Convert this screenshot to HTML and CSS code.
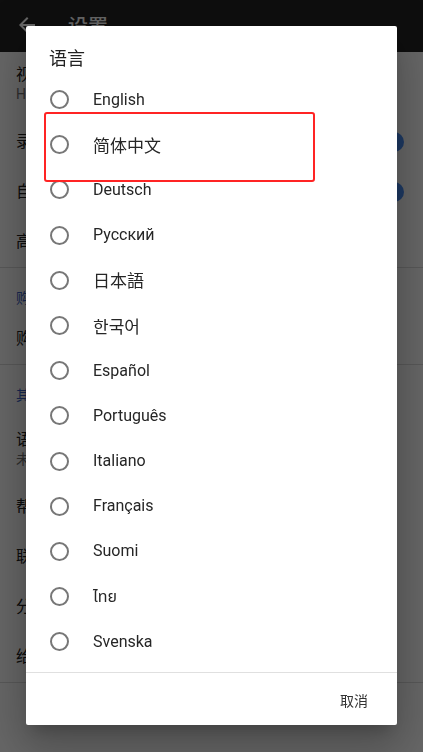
FILE: index.html
```html
<!DOCTYPE html>
<html lang="zh-CN">
<head>
<meta charset="utf-8">
<title>设置</title>
<link rel="stylesheet" href="styles.css">
</head>
<body>
<div class="screen">
  <header class="appbar">
    <svg class="back" viewBox="0 0 24 24" width="24" height="24"><path d="M20 11H7.83l5.59-5.59L12 4l-8 8 8 8 1.41-1.41L7.83 13H20v-2z" fill="#fff"/></svg>
    <span class="appbar-title">设置</span>
  </header>
  <div class="item two">
    <div class="item-title">视频质量</div>
    <div class="item-sub">HD 720p</div>
  </div>
  <div class="item"><span class="item-title">录制音频</span><span class="switch"><span class="knob"></span></span></div>
  <div class="item"><span class="item-title">自动保存</span><span class="switch"><span class="knob"></span></span></div>
  <div class="item"><span class="item-title">高级设置</span></div>
  <div class="divider"></div>
  <div class="cat">购买</div>
  <div class="item"><span class="item-title">购买专业版</span></div>
  <div class="divider"></div>
  <div class="cat">其他</div>
  <div class="item two two-b">
    <div class="item-title">语言</div>
    <div class="item-sub">未设置</div>
  </div>
  <div class="item"><span class="item-title">帮助</span></div>
  <div class="item"><span class="item-title">联系我们</span></div>
  <div class="item"><span class="item-title">分享应用</span></div>
  <div class="item"><span class="item-title">给我们评分</span></div>
  <div class="divider"></div>
</div>
<div class="scrim"></div>
<div class="dialog">
  <div class="dialog-title">语言</div>
  <ul class="options">
    <li class="option"><span class="radio"></span><span class="label">English</span></li>
    <li class="option"><span class="radio"></span><span class="label cjk">简体中文</span></li>
    <li class="option"><span class="radio"></span><span class="label">Deutsch</span></li>
    <li class="option"><span class="radio"></span><span class="label">Русский</span></li>
    <li class="option"><span class="radio"></span><span class="label cjk ja">日本語</span></li>
    <li class="option"><span class="radio"></span><span class="label cjk ko">한국어</span></li>
    <li class="option"><span class="radio"></span><span class="label">Español</span></li>
    <li class="option"><span class="radio"></span><span class="label">Português</span></li>
    <li class="option"><span class="radio"></span><span class="label">Italiano</span></li>
    <li class="option"><span class="radio"></span><span class="label">Français</span></li>
    <li class="option"><span class="radio"></span><span class="label">Suomi</span></li>
    <li class="option"><span class="radio"></span><span class="label th">ไทย</span></li>
    <li class="option"><span class="radio"></span><span class="label">Svenska</span></li>
  </ul>
  <div class="dialog-actions"><span class="btn">取消</span></div>
</div>
<div class="highlight"></div>
</body>
</html>
```

FILE: styles.css
```css
* { box-sizing: border-box; }
html, body { margin: 0; padding: 0; }
body {
  width: 423px;
  height: 752px;
  overflow: hidden;
  background: #fff;
  font-family: Roboto, "Noto Sans CJK SC", "Noto Sans", sans-serif;
  color: #212121;
}
.screen { display: flex; flex-direction: column; }
.appbar {
  height: 52px;
  background: #252525;
  display: flex;
  align-items: center;
  padding-left: 15px;
  gap: 29px;
}
.back { display: block; margin-top: -2px; }
.appbar-title { color: #fff; font-size: 20px; font-weight: 500; line-height: 24px; margin-top: 2px; }
.item {
  height: 50px;
  padding: 0 16px;
  display: flex;
  align-items: center;
  justify-content: space-between;
  font-size: 16px;
}
.item.two {
  height: 65px;
  flex-direction: column;
  align-items: flex-start;
  justify-content: flex-start;
  padding-top: 13px;
}
.item.two-b { height: 71px; padding-top: 19px; }
.item-title { line-height: 20px; }
.item-sub { line-height: 18px; font-size: 14px; color: #757575; }
.divider { height: 1px; background: #dcdcdc; }
.cat {
  height: 46px;
  padding: 21px 16px 7px;
  font-size: 14px;
  line-height: 18px;
  color: #3a62c8;
}
.switch { position: relative; width: 36px; height: 14px; border-radius: 7px; background: #a9c3ee; margin-right: 5px; }
.knob {
  position: absolute;
  right: -2px;
  top: -3px;
  width: 20px;
  height: 20px;
  border-radius: 50%;
  background: #4a8ff7;
}
.scrim { position: fixed; inset: 0; background: rgba(0, 0, 0, 0.6); }
.dialog {
  position: absolute;
  left: 26px;
  top: 26px;
  width: 371px;
  height: 699px;
  background: #fff;
  border-radius: 2px;
  box-shadow: 0 11px 15px -7px rgba(0,0,0,.2), 0 24px 38px 3px rgba(0,0,0,.14), 0 9px 46px 8px rgba(0,0,0,.12);
  display: flex;
  flex-direction: column;
}
.dialog-title {
  padding: 20px 23px 0;
  height: 43px;
  font-size: 18px;
  line-height: 22px;
  color: #212121;
  font-family: "Noto Sans CJK SC", sans-serif;
}
.options { list-style: none; margin: 0; padding: 8px 0 8px; }
.option {
  height: 45.2px;
  display: flex;
  align-items: center;
  padding-left: 24px;
  gap: 24px;
}
.radio {
  width: 19px;
  height: 19px;
  border: 2px solid #777;
  border-radius: 50%;
  flex: none;
}
.label { font-size: 16px; color: #262626; line-height: 20px; }
.label.cjk { font-size: 17px; font-family: "Noto Sans CJK SC", sans-serif; }
.label.ja { font-family: "Noto Sans CJK JP", sans-serif; }
.label.ko { font-family: "Noto Sans CJK KR", sans-serif; }
.label.th { font-family: "Noto Sans Thai", "Noto Sans", "DejaVu Sans", sans-serif; }
.dialog-actions {
  border-top: 1px solid #e0e0e0;
  flex: 1;
  display: flex;
  align-items: center;
  justify-content: flex-end;
  padding-right: 29px;
}
.btn { font-size: 14px; color: #333; font-family: "Noto Sans CJK SC", sans-serif; margin-top: 2px; }
.highlight {
  position: absolute;
  left: 44px;
  top: 112px;
  width: 271px;
  height: 70px;
  border: 2px solid #ff2424;
  border-radius: 3px;
}
```
